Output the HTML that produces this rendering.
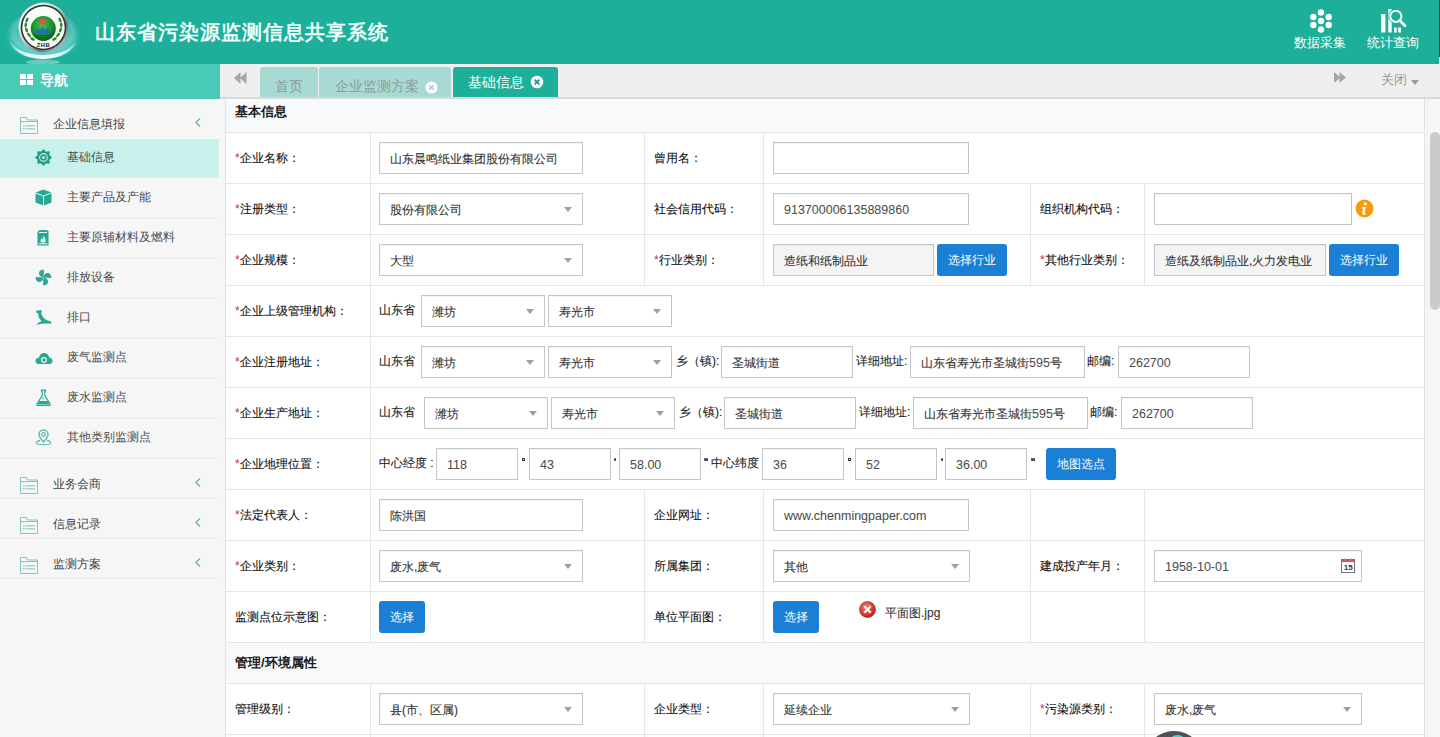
<!DOCTYPE html><html><head><meta charset="utf-8"><style>
html,body{margin:0;padding:0;width:1440px;height:737px;overflow:hidden;background:#f6f6f6;font-family:"Liberation Sans",sans-serif;}
div{position:absolute;box-sizing:content-box;}
.t{white-space:nowrap;}
.req{color:#b8345a;font-size:12px;position:relative;top:0;-webkit-text-stroke:0;}
.in{border:1px solid #c6c6c6;box-shadow:inset 0 1px 1px rgba(0,0,0,.05);}
.l{font-size:12.5px;color:#4d4d4d;-webkit-text-stroke:0.05px #4d4d4d;}
.arr{width:0;height:0;border-left:4.5px solid transparent;border-right:4.5px solid transparent;border-top:5px solid #a0a0a0;}
.btn{background:#1b7fd5;border-radius:3px;color:#fff;font-size:12px;text-align:center;}
.hl{background:#e6e6e6;height:1px;}
.vl{background:#e6e6e6;width:1px;}
</style></head><body>

<div style="left:0px;top:0px;width:1440px;height:64px;background:#1daf99;"></div>
<div style="left:1439px;top:0px;width:1px;height:57px;background:#0e4640;"></div>
<div style="left:1439px;top:57px;width:1px;height:7px;background:#e6f6f3;"></div>
<svg style="position:absolute;left:0;top:0" width="90" height="64" viewBox="0 0 90 64">
<defs>
<linearGradient id="sw" x1="0" y1="0" x2="0" y2="1"><stop offset="0" stop-color="#b8f0ff" stop-opacity="0"/><stop offset="0.6" stop-color="#d8f8ff" stop-opacity="0.8"/><stop offset="1" stop-color="#ffffff" stop-opacity="1"/></linearGradient>
<radialGradient id="gl2" cx="50%" cy="50%" r="50%"><stop offset="0" stop-color="#a8e8f4" stop-opacity="0.7"/><stop offset="1" stop-color="#a8e8f4" stop-opacity="0"/></radialGradient>
<radialGradient id="gl3" cx="50%" cy="45%" r="50%"><stop offset="0.5" stop-color="#c8f4ff" stop-opacity="0"/><stop offset="0.8" stop-color="#c8f4ff" stop-opacity="0.3"/><stop offset="1" stop-color="#c8f4ff" stop-opacity="0"/></radialGradient>
<linearGradient id="rim" x1="0" y1="0" x2="1" y2="1"><stop offset="0" stop-color="#ffffff"/><stop offset="0.45" stop-color="#c8d0d2"/><stop offset="0.7" stop-color="#6f7a7e"/><stop offset="1" stop-color="#e6eeee"/></linearGradient>
<radialGradient id="gb" cx="45%" cy="35%" r="65%"><stop offset="0" stop-color="#4cc04e"/><stop offset="0.7" stop-color="#138a2a"/><stop offset="1" stop-color="#0a5a1a"/></radialGradient>
</defs>
<ellipse cx="43" cy="36" rx="37" ry="25" fill="url(#gl3)"/><ellipse cx="43" cy="42" rx="38" ry="18" fill="url(#gl2)"/>
<path d="M8 38 Q14 58 43 59 Q72 58 78 38 Q70 54 43 55 Q16 54 8 38 Z" fill="url(#sw)"/>
<ellipse cx="43" cy="62" rx="17" ry="2.5" fill="#c0f0f4" opacity="0.45"/>
<circle cx="43.5" cy="27.5" r="25" fill="url(#rim)"/>
<circle cx="43.5" cy="27.5" r="22.8" fill="#2f3436"/>
<circle cx="43.5" cy="27.5" r="21.2" fill="#f6fbf4"/>
<g fill="#2f8a2e">
<ellipse cx="27" cy="20" rx="1.3" ry="2.6" transform="rotate(25 27 20)"/><ellipse cx="25.8" cy="25" rx="1.3" ry="2.6" transform="rotate(5 25.8 25)"/><ellipse cx="26.5" cy="30" rx="1.3" ry="2.6" transform="rotate(-20 26.5 30)"/><ellipse cx="29" cy="35" rx="1.3" ry="2.6" transform="rotate(-40 29 35)"/><ellipse cx="32.5" cy="39" rx="1.3" ry="2.6" transform="rotate(-60 32.5 39)"/>
<ellipse cx="60" cy="20" rx="1.3" ry="2.6" transform="rotate(-25 60 20)"/><ellipse cx="61.2" cy="25" rx="1.3" ry="2.6" transform="rotate(-5 61.2 25)"/><ellipse cx="60.5" cy="30" rx="1.3" ry="2.6" transform="rotate(20 60.5 30)"/><ellipse cx="58" cy="35" rx="1.3" ry="2.6" transform="rotate(40 58 35)"/><ellipse cx="54.5" cy="39" rx="1.3" ry="2.6" transform="rotate(60 54.5 39)"/>
</g>
<circle cx="43.3" cy="28.5" r="12.5" fill="url(#gb)"/>
<circle cx="43" cy="21.5" r="3" fill="#f04a4a"/>
<path d="M35.5 33 L38 28 L40 31 L42.5 26.5 L45 31 L47.5 28 L50.5 33 Z" fill="#2460d8" opacity="0.9"/><path d="M34 35.5 H52.5 M35 37.5 H51.5" stroke="#0b5a1c" stroke-width="0.8"/>
<text x="43.5" y="47" font-size="5.8" font-weight="bold" text-anchor="middle" fill="#1a1a1a" font-family="Liberation Sans" letter-spacing="0.6">ZHB</text>
</svg>
<div class="t" style="left:95px;top:17px;height:30px;line-height:30px;color:#eefffb;font-size:20px;font-weight:bold;letter-spacing:0.97px;">山东省污染源监测信息共享系统</div>
<svg style="position:absolute;left:1305px;top:6px" width="32" height="30" viewBox="0 0 32 30">
<g fill="#fff"><circle cx="16" cy="6.5" r="3.2"/><circle cx="8.3" cy="11" r="3.2"/><circle cx="23.7" cy="11" r="3.2"/><circle cx="16" cy="15" r="3.2"/><circle cx="8.3" cy="19" r="3.2"/><circle cx="23.7" cy="19" r="3.2"/><circle cx="16" cy="23.5" r="3.2"/></g></svg>
<svg style="position:absolute;left:1378px;top:6px" width="32" height="30" viewBox="0 0 32 30">
<g fill="#fff"><rect x="3" y="8" width="4.4" height="18.5"/><rect x="10.3" y="3" width="3.4" height="23.5"/><rect x="16" y="21.5" width="2.7" height="5"/><rect x="20.2" y="21.5" width="2.8" height="5"/></g>
<circle cx="17.8" cy="10.3" r="5.6" stroke="#1daf99" stroke-width="3.6" fill="none"/>
<circle cx="17.8" cy="10.3" r="5.6" stroke="#fff" stroke-width="2" fill="none"/><path d="M21.8 14.5 L27 19.8" stroke="#fff" stroke-width="2.8" stroke-linecap="round"/></svg>
<div class="t" style="left:1294px;top:33px;height:20px;line-height:20px;color:#fff;font-size:13px;">数据采集</div>
<div class="t" style="left:1367px;top:33px;height:20px;line-height:20px;color:#fff;font-size:13px;">统计查询</div>
<div style="left:0px;top:64px;width:220px;height:673px;background:#f6f6f6;"></div>
<div style="left:0px;top:64px;width:220px;height:35px;background:#47cbb6;"></div>
<svg style="position:absolute;left:20px;top:74px" width="13" height="11"><g fill="#fff"><rect x="0" y="0" width="6" height="5"/><rect x="7" y="0" width="6" height="5"/><rect x="0" y="6" width="6" height="5"/><rect x="7" y="6" width="6" height="5"/></g></svg>
<div class="t" style="left:40px;top:70px;height:20px;line-height:20px;color:#fff;font-size:14px;font-weight:bold;">导航</div>
<svg style="position:absolute;left:20px;top:117px" width="18" height="17" viewBox="0 0 18 17"><path d="M0.5 16.5 V0.5 H6 L7.5 3 H17.5 V16.5 Z M0.5 4.5 H17.5" stroke="#7ec9bd" stroke-width="1" fill="none"/><g fill="#9ed6cc"><rect x="3" y="8" width="2" height="1.5"/><rect x="6" y="8" width="9" height="1.5"/><rect x="3" y="11" width="2" height="1.5"/><rect x="6" y="11" width="9" height="1.5"/></g></svg>
<div class="t" style="left:53px;top:114px;height:20px;line-height:20px;color:#444;font-size:12px;">企业信息填报</div>
<svg style="position:absolute;left:194px;top:118px" width="8" height="9"><path d="M6 0.5 L2 4.5 L6 8.5" stroke="#6aaea3" stroke-width="1.3" fill="none"/></svg>
<div style="left:0px;top:139px;width:219px;height:39px;background:#c9f1eb;"></div>
<div style="left:35px;top:149px;width:17px;height:17px"><svg width="17" height="17" viewBox="0 0 17 17"><path d="M8.50 0.30 L10.76 3.05 L14.30 2.70 L13.95 6.24 L16.70 8.50 L13.95 10.76 L14.30 14.30 L10.76 13.95 L8.50 16.70 L6.24 13.95 L2.70 14.30 L3.05 10.76 L0.30 8.50 L3.05 6.24 L2.70 2.70 L6.24 3.05Z" fill="#239c87" stroke="#239c87" stroke-width="0.8" stroke-linejoin="round"/><circle cx="8.5" cy="8.5" r="4.4" fill="#c9f1eb"/><circle cx="8.5" cy="8.5" r="3.3" fill="#239c87"/><circle cx="8.5" cy="8.5" r="1.5" fill="#c9f1eb"/></svg></div>
<div class="t" style="left:67px;top:147px;height:20px;line-height:20px;color:#4a4a4a;font-size:12px;">基础信息</div>
<div style="left:35px;top:189px;width:17px;height:17px"><svg width="17" height="17" viewBox="0 0 17 17"><path d="M8.5 0.5 L16.5 3.5 L8.5 6.5 L0.5 3.5 Z" fill="#26a892"/><path d="M0.5 4.5 L8 7.3 V16.5 L0.5 13.5 Z" fill="#26a892"/><path d="M16.5 4.5 L9 7.3 V16.5 L16.5 13.5 Z" fill="#26a892"/></svg></div>
<div class="t" style="left:67px;top:187px;height:20px;line-height:20px;color:#4a4a4a;font-size:12px;">主要产品及产能</div>
<div style="left:35px;top:229px;width:17px;height:17px"><svg width="17" height="17" viewBox="0 0 17 17"><path d="M4.5 1 H12 L13.5 2.5 V16.5 H2.5 V3 Z" fill="#26a892"/><rect x="4" y="3" width="8" height="1" fill="#f6f6f6"/><path d="M8 6.5 C10.5 9 11 11 10.5 12.5 C10 14 6 14 5.6 12.5 C5.2 11 6.2 9.8 6.8 9 C7 10 7.5 10.5 8 10.2 C8.4 9 8.3 7.5 8 6.5Z" fill="#f6f6f6"/><rect x="3.5" y="14.3" width="9" height="1" fill="#f6f6f6"/></svg></div>
<div class="t" style="left:67px;top:227px;height:20px;line-height:20px;color:#4a4a4a;font-size:12px;">主要原辅材料及燃料</div>
<div style="left:35px;top:269px;width:17px;height:17px"><svg width="17" height="17" viewBox="0 0 17 17"><g fill="#26a892"><path id="bl" d="M8.5 8.5 L9 0.8 C6.5 0.2 3.6 2.2 4 4.8 C4.3 7 6.3 8.3 8.5 8.5Z"/><use href="#bl" transform="rotate(90 8.5 8.5)"/><use href="#bl" transform="rotate(180 8.5 8.5)"/><use href="#bl" transform="rotate(270 8.5 8.5)"/></g></svg></div>
<div class="t" style="left:67px;top:267px;height:20px;line-height:20px;color:#4a4a4a;font-size:12px;">排放设备</div>
<div style="left:35px;top:309px;width:17px;height:17px"><svg width="17" height="17" viewBox="0 0 17 17"><path d="M1.2 1.8 L5.5 1 C6.6 1 7.1 2 6.6 3 L6.2 4.5 C6.8 7.5 9.2 9.8 12 11.2 C13.5 11.9 15 12.3 16.2 12.6 L16.2 14.8 C12.5 14.4 9.5 14.2 7 14.7 C4.8 15.1 3.2 15.8 1.3 15.6 C2.8 13.8 4.8 12.7 6.8 12.2 C4.2 9.8 3 7 3.1 4.2 L1.2 3.8Z" fill="#26a892"/></svg></div>
<div class="t" style="left:67px;top:307px;height:20px;line-height:20px;color:#4a4a4a;font-size:12px;">排口</div>
<div style="left:35px;top:349px;width:17px;height:17px"><svg width="18" height="17" viewBox="0 0 18 17"><path d="M4 15 C1 15 0 12.5 0.8 10.5 C1.5 9 3 8.5 4 8.7 C4.5 5.5 7.5 3.5 10.5 4.3 C13 5 14 7 14 8.5 C16.5 8.5 17.8 10.5 17.5 12.5 C17.2 14 16 15 14.5 15Z" fill="#26a892"/><circle cx="9" cy="11" r="3" fill="#f5f5f5"/><circle cx="9" cy="11" r="1.8" fill="#26a892"/></svg></div>
<div class="t" style="left:67px;top:347px;height:20px;line-height:20px;color:#4a4a4a;font-size:12px;">废气监测点</div>
<div style="left:35px;top:389px;width:17px;height:17px"><svg width="17" height="17" viewBox="0 0 17 17"><path d="M6.5 1 H10.5 V2.2 H9.8 V6.5 L15 15 V16.5 H2 V15 L7.2 6.5 V2.2 H6.5Z" fill="none" stroke="#26a892" stroke-width="1.2"/><path d="M4.5 12 H12.5 L14.5 15.5 H2.5Z" fill="#26a892"/><circle cx="8" cy="9.5" r="0.8" fill="#26a892"/></svg></div>
<div class="t" style="left:67px;top:387px;height:20px;line-height:20px;color:#4a4a4a;font-size:12px;">废水监测点</div>
<div style="left:35px;top:429px;width:17px;height:17px"><svg width="17" height="17" viewBox="0 0 17 17"><path d="M8.5 13 C5.5 9.5 4 7.5 4 5.5 C4 3 6 1 8.5 1 C11 1 13 3 13 5.5 C13 7.5 11.5 9.5 8.5 13Z" fill="none" stroke="#5bbfae" stroke-width="1.5"/><circle cx="8.5" cy="5.5" r="1.8" fill="none" stroke="#5bbfae" stroke-width="1.3"/><path d="M5 11.5 C2 12 1 13 1.5 14.5 C2.5 16 14.5 16 15.5 14.5 C16 13 15 12 12 11.5" fill="none" stroke="#5bbfae" stroke-width="1.3"/></svg></div>
<div class="t" style="left:67px;top:427px;height:20px;line-height:20px;color:#4a4a4a;font-size:12px;">其他类别监测点</div>
<div style="left:0px;top:218px;width:219px;height:1px;background:#e9e9e9;"></div>
<div style="left:0px;top:258px;width:219px;height:1px;background:#e9e9e9;"></div>
<div style="left:0px;top:298px;width:219px;height:1px;background:#e9e9e9;"></div>
<div style="left:0px;top:338px;width:219px;height:1px;background:#e9e9e9;"></div>
<div style="left:0px;top:378px;width:219px;height:1px;background:#e9e9e9;"></div>
<div style="left:0px;top:418px;width:219px;height:1px;background:#e9e9e9;"></div>
<div style="left:0px;top:458px;width:219px;height:1px;background:#e9e9e9;"></div>
<div style="left:0px;top:498px;width:219px;height:1px;background:#e9e9e9;"></div>
<div style="left:0px;top:538px;width:219px;height:1px;background:#e9e9e9;"></div>
<div style="left:0px;top:578px;width:219px;height:1px;background:#e9e9e9;"></div>
<svg style="position:absolute;left:20px;top:477px" width="18" height="17" viewBox="0 0 18 17"><path d="M0.5 16.5 V0.5 H6 L7.5 3 H17.5 V16.5 Z M0.5 4.5 H17.5" stroke="#7ec9bd" stroke-width="1" fill="none"/><g fill="#9ed6cc"><rect x="3" y="8" width="2" height="1.5"/><rect x="6" y="8" width="9" height="1.5"/><rect x="3" y="11" width="2" height="1.5"/><rect x="6" y="11" width="9" height="1.5"/></g></svg>
<div class="t" style="left:53px;top:474px;height:20px;line-height:20px;color:#444;font-size:12px;">业务会商</div>
<svg style="position:absolute;left:194px;top:478px" width="8" height="9"><path d="M6 0.5 L2 4.5 L6 8.5" stroke="#6aaea3" stroke-width="1.3" fill="none"/></svg>
<svg style="position:absolute;left:20px;top:517px" width="18" height="17" viewBox="0 0 18 17"><path d="M0.5 16.5 V0.5 H6 L7.5 3 H17.5 V16.5 Z M0.5 4.5 H17.5" stroke="#7ec9bd" stroke-width="1" fill="none"/><g fill="#9ed6cc"><rect x="3" y="8" width="2" height="1.5"/><rect x="6" y="8" width="9" height="1.5"/><rect x="3" y="11" width="2" height="1.5"/><rect x="6" y="11" width="9" height="1.5"/></g></svg>
<div class="t" style="left:53px;top:514px;height:20px;line-height:20px;color:#444;font-size:12px;">信息记录</div>
<svg style="position:absolute;left:194px;top:518px" width="8" height="9"><path d="M6 0.5 L2 4.5 L6 8.5" stroke="#6aaea3" stroke-width="1.3" fill="none"/></svg>
<svg style="position:absolute;left:20px;top:557px" width="18" height="17" viewBox="0 0 18 17"><path d="M0.5 16.5 V0.5 H6 L7.5 3 H17.5 V16.5 Z M0.5 4.5 H17.5" stroke="#7ec9bd" stroke-width="1" fill="none"/><g fill="#9ed6cc"><rect x="3" y="8" width="2" height="1.5"/><rect x="6" y="8" width="9" height="1.5"/><rect x="3" y="11" width="2" height="1.5"/><rect x="6" y="11" width="9" height="1.5"/></g></svg>
<div class="t" style="left:53px;top:554px;height:20px;line-height:20px;color:#444;font-size:12px;">监测方案</div>
<svg style="position:absolute;left:194px;top:558px" width="8" height="9"><path d="M6 0.5 L2 4.5 L6 8.5" stroke="#6aaea3" stroke-width="1.3" fill="none"/></svg>
<div style="left:220px;top:64px;width:1220px;height:33px;background:#efefef;"></div>
<div style="left:220px;top:97px;width:1220px;height:2px;background:#d9d9d9;"></div>
<svg style="position:absolute;left:233.5px;top:72px" width="13" height="12"><path d="M0 6 L6.5 0 V12Z M6 6 L12.5 0 V12Z" fill="#a6a6a6"/></svg>
<svg style="position:absolute;left:1333.5px;top:71.5px" width="13" height="12"><path d="M0 0 L6.5 5.5 L0 11Z M5.5 0 L12 5.5 L5.5 11Z" fill="#a6a6a6"/></svg>
<div style="left:260px;top:67px;width:58px;height:30px;background:#a8d9d3;border-radius:3px 3px 0 0;"></div>
<div class="t" style="left:275px;top:76px;height:20px;line-height:20px;color:#8c9c9a;font-size:14px;">首页</div>
<div style="left:319px;top:67px;width:132px;height:30px;background:#a8d9d3;border-radius:3px 3px 0 0;"></div>
<div class="t" style="left:335px;top:76px;height:20px;line-height:20px;color:#8c9c9a;font-size:14px;">企业监测方案</div>
<svg style="position:absolute;left:425px;top:81px" width="13" height="13"><circle cx="6.5" cy="6.5" r="6" fill="#fff"/><path d="M4.2 4.2 L8.8 8.8 M8.8 4.2 L4.2 8.8" stroke="#b5c9c6" stroke-width="1.6"/></svg>
<div style="left:453px;top:67px;width:105px;height:30px;background:#1daf99;border-radius:3px 3px 0 0;"></div>
<div class="t" style="left:468px;top:72px;height:20px;line-height:20px;color:#fff;font-size:14px;">基础信息</div>
<svg style="position:absolute;left:530px;top:75px" width="14" height="14"><circle cx="7" cy="7" r="6.3" fill="#fff"/><path d="M4.6 4.6 L9.4 9.4 M9.4 4.6 L4.6 9.4" stroke="#1e9c88" stroke-width="1.8"/></svg>
<div class="t" style="left:1381px;top:70px;height:20px;line-height:20px;color:#999;font-size:13px;">关闭</div>
<div class="arr" style="left:1411px;top:80px;border-top-color:#999;"></div>
<div style="left:225px;top:99px;width:1px;height:638px;background:#e2e2e2;"></div>
<div style="left:226px;top:99px;width:1198px;height:33px;background:#f8f9fb;"></div>
<div style="left:1424px;top:99px;width:1px;height:638px;background:#e2e2e2;"></div>
<div style="left:226px;top:132px;width:1198px;height:605px;background:#fff;"></div>
<div style="left:226px;top:642px;width:1198px;height:41px;background:#f8f9fb;"></div>
<div class="t" style="left:235px;top:102px;height:20px;line-height:20px;color:#1a1a1a;font-size:13px;font-weight:bold;">基本信息</div>
<div class="t" style="left:235px;top:653px;height:20px;line-height:20px;color:#1a1a1a;font-size:13px;font-weight:bold;">管理/环境属性</div>
<div style="left:226px;top:132px;width:1198px;height:1px;background:#e6e6e6;"></div>
<div style="left:226px;top:183px;width:1198px;height:1px;background:#e6e6e6;"></div>
<div style="left:226px;top:234px;width:1198px;height:1px;background:#e6e6e6;"></div>
<div style="left:226px;top:285px;width:1198px;height:1px;background:#e6e6e6;"></div>
<div style="left:226px;top:336px;width:1198px;height:1px;background:#e6e6e6;"></div>
<div style="left:226px;top:387px;width:1198px;height:1px;background:#e6e6e6;"></div>
<div style="left:226px;top:438px;width:1198px;height:1px;background:#e6e6e6;"></div>
<div style="left:226px;top:489px;width:1198px;height:1px;background:#e6e6e6;"></div>
<div style="left:226px;top:540px;width:1198px;height:1px;background:#e6e6e6;"></div>
<div style="left:226px;top:591px;width:1198px;height:1px;background:#e6e6e6;"></div>
<div style="left:226px;top:642px;width:1198px;height:1px;background:#e6e6e6;"></div>
<div style="left:226px;top:683px;width:1198px;height:1px;background:#e6e6e6;"></div>
<div style="left:226px;top:734px;width:1198px;height:1px;background:#e6e6e6;"></div>
<div style="left:370px;top:132px;width:1px;height:510px;background:#e6e6e6;"></div>
<div style="left:370px;top:683px;width:1px;height:54px;background:#e6e6e6;"></div>
<div style="left:644px;top:132px;width:1px;height:153px;background:#e6e6e6;"></div>
<div style="left:644px;top:489px;width:1px;height:153px;background:#e6e6e6;"></div>
<div style="left:644px;top:683px;width:1px;height:54px;background:#e6e6e6;"></div>
<div style="left:763px;top:132px;width:1px;height:153px;background:#e6e6e6;"></div>
<div style="left:763px;top:489px;width:1px;height:153px;background:#e6e6e6;"></div>
<div style="left:763px;top:683px;width:1px;height:54px;background:#e6e6e6;"></div>
<div style="left:1030px;top:183px;width:1px;height:102px;background:#e6e6e6;"></div>
<div style="left:1030px;top:489px;width:1px;height:153px;background:#e6e6e6;"></div>
<div style="left:1030px;top:683px;width:1px;height:54px;background:#e6e6e6;"></div>
<div style="left:1144px;top:183px;width:1px;height:102px;background:#e6e6e6;"></div>
<div style="left:1144px;top:489px;width:1px;height:153px;background:#e6e6e6;"></div>
<div style="left:1144px;top:683px;width:1px;height:54px;background:#e6e6e6;"></div>
<div class="t" style="left:235px;top:148px;height:20px;line-height:20px;color:#111;font-size:12px;-webkit-text-stroke:0.1px #111;"><span class="req">*</span>企业名称：</div>
<div class="in" style="left:379px;top:142px;width:202px;height:30px;background:#fff"></div>
<div class="t" style="left:390px;top:149px;height:20px;line-height:20px;color:#333;font-size:12px;-webkit-text-stroke:0.1px #333;">山东晨鸣纸业集团股份有限公司</div>
<div class="t" style="left:654px;top:148px;height:20px;line-height:20px;color:#111;font-size:12px;-webkit-text-stroke:0.1px #111;">曾用名：</div>
<div class="in" style="left:773px;top:142px;width:194px;height:30px;background:#fff"></div>
<div class="t" style="left:235px;top:199px;height:20px;line-height:20px;color:#111;font-size:12px;-webkit-text-stroke:0.1px #111;"><span class="req">*</span>注册类型：</div>
<div class="in" style="left:379px;top:193px;width:202px;height:30px;background:#fff"></div>
<div class="t" style="left:390px;top:200px;height:20px;line-height:20px;color:#333;font-size:12px;-webkit-text-stroke:0.1px #333;">股份有限公司</div>
<div class="arr" style="left:564px;top:207px"></div>
<div class="t" style="left:654px;top:199px;height:20px;line-height:20px;color:#111;font-size:12px;-webkit-text-stroke:0.1px #111;">社会信用代码：</div>
<div class="in" style="left:773px;top:193px;width:194px;height:30px;background:#fff"></div>
<div class="t" style="left:784px;top:200px;height:20px;line-height:20px;color:#333;font-size:12px;-webkit-text-stroke:0.1px #333;"><span class="l">913700006135889860</span></div>
<div class="t" style="left:1040px;top:199px;height:20px;line-height:20px;color:#111;font-size:12px;-webkit-text-stroke:0.1px #111;">组织机构代码：</div>
<div class="in" style="left:1154px;top:193px;width:196px;height:30px;background:#fff"></div>
<svg style="position:absolute;left:1355px;top:199px" width="19" height="19"><circle cx="9.5" cy="9.5" r="9" fill="#f39c12"/><circle cx="10.3" cy="4.8" r="1.6" fill="#fff"/><path d="M7.2 8 H11 L9.5 13.5 C9.3 14.3 10 14.5 11 14 L10.5 15.5 C8.5 16.2 6.8 15.6 7.3 13.8 L8.4 9.5 H7 Z" fill="#fff"/></svg>
<div class="t" style="left:235px;top:250px;height:20px;line-height:20px;color:#111;font-size:12px;-webkit-text-stroke:0.1px #111;"><span class="req">*</span>企业规模：</div>
<div class="in" style="left:379px;top:244px;width:202px;height:30px;background:#fff"></div>
<div class="t" style="left:390px;top:251px;height:20px;line-height:20px;color:#333;font-size:12px;-webkit-text-stroke:0.1px #333;">大型</div>
<div class="arr" style="left:564px;top:258px"></div>
<div class="t" style="left:654px;top:250px;height:20px;line-height:20px;color:#111;font-size:12px;-webkit-text-stroke:0.1px #111;"><span class="req">*</span>行业类别：</div>
<div class="in" style="left:773px;top:244px;width:159px;height:30px;background:#f4f4f4"></div>
<div class="t" style="left:784px;top:251px;height:20px;line-height:20px;color:#333;font-size:12px;-webkit-text-stroke:0.1px #333;">造纸和纸制品业</div>
<div class="btn" style="left:937px;top:244px;width:70px;height:32px;line-height:32px">选择行业</div>
<div class="t" style="left:1040px;top:250px;height:20px;line-height:20px;color:#111;font-size:12px;-webkit-text-stroke:0.1px #111;"><span class="req">*</span>其他行业类别：</div>
<div class="in" style="left:1154px;top:244px;width:170px;height:30px;background:#f4f4f4"></div>
<div class="t" style="left:1165px;top:251px;height:20px;line-height:20px;color:#333;font-size:12px;-webkit-text-stroke:0.1px #333;">造纸及纸制品业,火力发电业</div>
<div class="btn" style="left:1329px;top:244px;width:70px;height:32px;line-height:32px">选择行业</div>
<div class="t" style="left:235px;top:301px;height:20px;line-height:20px;color:#111;font-size:12px;-webkit-text-stroke:0.1px #111;"><span class="req">*</span>企业上级管理机构：</div>
<div class="t" style="left:379px;top:300px;height:20px;line-height:20px;color:#222;font-size:12px;-webkit-text-stroke:0.1px #222;">山东省</div>
<div class="in" style="left:421px;top:295px;width:122px;height:30px;background:#fff"></div>
<div class="t" style="left:432px;top:302px;height:20px;line-height:20px;color:#333;font-size:12px;-webkit-text-stroke:0.1px #333;">潍坊</div>
<div class="arr" style="left:526px;top:309px"></div>
<div class="in" style="left:548px;top:295px;width:122px;height:30px;background:#fff"></div>
<div class="t" style="left:559px;top:302px;height:20px;line-height:20px;color:#333;font-size:12px;-webkit-text-stroke:0.1px #333;">寿光市</div>
<div class="arr" style="left:653px;top:309px"></div>
<div class="t" style="left:235px;top:352px;height:20px;line-height:20px;color:#111;font-size:12px;-webkit-text-stroke:0.1px #111;"><span class="req">*</span>企业注册地址：</div>
<div class="t" style="left:379px;top:351px;height:20px;line-height:20px;color:#222;font-size:12px;-webkit-text-stroke:0.1px #222;">山东省</div>
<div class="in" style="left:421px;top:346px;width:122px;height:30px;background:#fff"></div>
<div class="t" style="left:432px;top:353px;height:20px;line-height:20px;color:#333;font-size:12px;-webkit-text-stroke:0.1px #333;">潍坊</div>
<div class="arr" style="left:526px;top:360px"></div>
<div class="in" style="left:548px;top:346px;width:122px;height:30px;background:#fff"></div>
<div class="t" style="left:559px;top:353px;height:20px;line-height:20px;color:#333;font-size:12px;-webkit-text-stroke:0.1px #333;">寿光市</div>
<div class="arr" style="left:653px;top:360px"></div>
<div class="t" style="left:676px;top:351px;height:20px;line-height:20px;color:#222;font-size:12px;-webkit-text-stroke:0.1px #222;">乡（镇):</div>
<div class="in" style="left:721px;top:346px;width:130px;height:30px;background:#fff"></div>
<div class="t" style="left:732px;top:353px;height:20px;line-height:20px;color:#333;font-size:12px;-webkit-text-stroke:0.1px #333;">圣城街道</div>
<div class="t" style="left:856px;top:351px;height:20px;line-height:20px;color:#222;font-size:12px;-webkit-text-stroke:0.1px #222;">详细地址:</div>
<div class="in" style="left:910px;top:346px;width:173px;height:30px;background:#fff"></div>
<div class="t" style="left:921px;top:353px;height:20px;line-height:20px;color:#333;font-size:12px;-webkit-text-stroke:0.1px #333;">山东省寿光市圣城街<span class="l">595</span>号</div>
<div class="t" style="left:1087px;top:351px;height:20px;line-height:20px;color:#222;font-size:12px;-webkit-text-stroke:0.1px #222;">邮编:</div>
<div class="in" style="left:1118px;top:346px;width:130px;height:30px;background:#fff"></div>
<div class="t" style="left:1129px;top:353px;height:20px;line-height:20px;color:#333;font-size:12px;-webkit-text-stroke:0.1px #333;"><span class="l">262700</span></div>
<div class="t" style="left:235px;top:403px;height:20px;line-height:20px;color:#111;font-size:12px;-webkit-text-stroke:0.1px #111;"><span class="req">*</span>企业生产地址：</div>
<div class="t" style="left:379px;top:402px;height:20px;line-height:20px;color:#222;font-size:12px;-webkit-text-stroke:0.1px #222;">山东省</div>
<div class="in" style="left:424px;top:397px;width:122px;height:30px;background:#fff"></div>
<div class="t" style="left:435px;top:404px;height:20px;line-height:20px;color:#333;font-size:12px;-webkit-text-stroke:0.1px #333;">潍坊</div>
<div class="arr" style="left:529px;top:411px"></div>
<div class="in" style="left:551px;top:397px;width:122px;height:30px;background:#fff"></div>
<div class="t" style="left:562px;top:404px;height:20px;line-height:20px;color:#333;font-size:12px;-webkit-text-stroke:0.1px #333;">寿光市</div>
<div class="arr" style="left:656px;top:411px"></div>
<div class="t" style="left:679px;top:402px;height:20px;line-height:20px;color:#222;font-size:12px;-webkit-text-stroke:0.1px #222;">乡（镇):</div>
<div class="in" style="left:724px;top:397px;width:130px;height:30px;background:#fff"></div>
<div class="t" style="left:735px;top:404px;height:20px;line-height:20px;color:#333;font-size:12px;-webkit-text-stroke:0.1px #333;">圣城街道</div>
<div class="t" style="left:859px;top:402px;height:20px;line-height:20px;color:#222;font-size:12px;-webkit-text-stroke:0.1px #222;">详细地址:</div>
<div class="in" style="left:913px;top:397px;width:173px;height:30px;background:#fff"></div>
<div class="t" style="left:924px;top:404px;height:20px;line-height:20px;color:#333;font-size:12px;-webkit-text-stroke:0.1px #333;">山东省寿光市圣城街<span class="l">595</span>号</div>
<div class="t" style="left:1090px;top:402px;height:20px;line-height:20px;color:#222;font-size:12px;-webkit-text-stroke:0.1px #222;">邮编:</div>
<div class="in" style="left:1121px;top:397px;width:130px;height:30px;background:#fff"></div>
<div class="t" style="left:1132px;top:404px;height:20px;line-height:20px;color:#333;font-size:12px;-webkit-text-stroke:0.1px #333;"><span class="l">262700</span></div>
<div class="t" style="left:235px;top:454px;height:20px;line-height:20px;color:#111;font-size:12px;-webkit-text-stroke:0.1px #111;"><span class="req">*</span>企业地理位置：</div>
<div class="t" style="left:379px;top:453px;height:20px;line-height:20px;color:#222;font-size:12px;-webkit-text-stroke:0.1px #222;">中心经度 :</div>
<div class="in" style="left:436px;top:448px;width:80px;height:30px;background:#fff"></div>
<div class="t" style="left:447px;top:455px;height:20px;line-height:20px;color:#333;font-size:12px;-webkit-text-stroke:0.1px #333;"><span class="l">118</span></div>
<div style="left:522px;top:458px;width:1px;height:1px;border:1px solid #333;"></div>
<div class="in" style="left:529px;top:448px;width:80px;height:30px;background:#fff"></div>
<div class="t" style="left:540px;top:455px;height:20px;line-height:20px;color:#333;font-size:12px;-webkit-text-stroke:0.1px #333;"><span class="l">43</span></div>
<div style="left:614px;top:458px;width:2px;height:3px;background:#444;border-radius:1px 1px 0 1px;"></div>
<div class="in" style="left:619px;top:448px;width:80px;height:30px;background:#fff"></div>
<div class="t" style="left:630px;top:455px;height:20px;line-height:20px;color:#333;font-size:12px;-webkit-text-stroke:0.1px #333;"><span class="l">58.00</span></div>
<div style="left:704px;top:458px;width:2px;height:3px;background:#444;border-radius:1px 1px 0 1px;"></div>
<div style="left:706px;top:458px;width:2px;height:3px;background:#444;border-radius:1px 1px 0 1px;"></div>
<div class="t" style="left:711px;top:453px;height:20px;line-height:20px;color:#222;font-size:12px;-webkit-text-stroke:0.1px #222;">中心纬度</div>
<div class="in" style="left:762px;top:448px;width:80px;height:30px;background:#fff"></div>
<div class="t" style="left:773px;top:455px;height:20px;line-height:20px;color:#333;font-size:12px;-webkit-text-stroke:0.1px #333;"><span class="l">36</span></div>
<div style="left:848px;top:458px;width:1px;height:1px;border:1px solid #333;"></div>
<div class="in" style="left:855px;top:448px;width:80px;height:30px;background:#fff"></div>
<div class="t" style="left:866px;top:455px;height:20px;line-height:20px;color:#333;font-size:12px;-webkit-text-stroke:0.1px #333;"><span class="l">52</span></div>
<div style="left:941px;top:458px;width:2px;height:3px;background:#444;border-radius:1px 1px 0 1px;"></div>
<div class="in" style="left:945px;top:448px;width:80px;height:30px;background:#fff"></div>
<div class="t" style="left:956px;top:455px;height:20px;line-height:20px;color:#333;font-size:12px;-webkit-text-stroke:0.1px #333;"><span class="l">36.00</span></div>
<div style="left:1031px;top:458px;width:2px;height:3px;background:#444;border-radius:1px 1px 0 1px;"></div>
<div style="left:1033px;top:458px;width:2px;height:3px;background:#444;border-radius:1px 1px 0 1px;"></div>
<div class="btn" style="left:1046px;top:448px;width:70px;height:32px;line-height:32px">地图选点</div>
<div class="t" style="left:235px;top:505px;height:20px;line-height:20px;color:#111;font-size:12px;-webkit-text-stroke:0.1px #111;"><span class="req">*</span>法定代表人：</div>
<div class="in" style="left:379px;top:499px;width:202px;height:30px;background:#fff"></div>
<div class="t" style="left:390px;top:506px;height:20px;line-height:20px;color:#333;font-size:12px;-webkit-text-stroke:0.1px #333;">陈洪国</div>
<div class="t" style="left:654px;top:505px;height:20px;line-height:20px;color:#111;font-size:12px;-webkit-text-stroke:0.1px #111;">企业网址：</div>
<div class="in" style="left:773px;top:499px;width:194px;height:30px;background:#fff"></div>
<div class="t" style="left:784px;top:506px;height:20px;line-height:20px;color:#333;font-size:12px;-webkit-text-stroke:0.1px #333;"><span class="l">www.chenmingpaper.com</span></div>
<div class="t" style="left:235px;top:556px;height:20px;line-height:20px;color:#111;font-size:12px;-webkit-text-stroke:0.1px #111;"><span class="req">*</span>企业类别：</div>
<div class="in" style="left:379px;top:550px;width:202px;height:30px;background:#fff"></div>
<div class="t" style="left:390px;top:557px;height:20px;line-height:20px;color:#333;font-size:12px;-webkit-text-stroke:0.1px #333;">废水,废气</div>
<div class="arr" style="left:564px;top:564px"></div>
<div class="t" style="left:654px;top:556px;height:20px;line-height:20px;color:#111;font-size:12px;-webkit-text-stroke:0.1px #111;">所属集团：</div>
<div class="in" style="left:773px;top:550px;width:195px;height:30px;background:#fff"></div>
<div class="t" style="left:784px;top:557px;height:20px;line-height:20px;color:#333;font-size:12px;-webkit-text-stroke:0.1px #333;">其他</div>
<div class="arr" style="left:951px;top:564px"></div>
<div class="t" style="left:1040px;top:556px;height:20px;line-height:20px;color:#111;font-size:12px;-webkit-text-stroke:0.1px #111;">建成投产年月：</div>
<div class="in" style="left:1154px;top:550px;width:206px;height:30px;background:#fff"></div>
<div class="t" style="left:1165px;top:557px;height:20px;line-height:20px;color:#333;font-size:12px;-webkit-text-stroke:0.1px #333;"><span class="l">1958-10-01</span></div>
<svg style="position:absolute;left:1341px;top:558px" width="15" height="15"><rect x="0.5" y="1.5" width="13" height="13" fill="#fff" stroke="#6f6f6f"/><rect x="0.5" y="1.5" width="13" height="2.5" fill="#c85a58"/><rect x="3" y="0.5" width="1.2" height="2" fill="#b88"/><rect x="9.8" y="0.5" width="1.2" height="2" fill="#b88"/><text x="7.3" y="12" font-size="8" font-weight="bold" text-anchor="middle" fill="#333" font-family="Liberation Sans">15</text></svg>
<div class="t" style="left:235px;top:607px;height:20px;line-height:20px;color:#111;font-size:12px;-webkit-text-stroke:0.1px #111;">监测点位示意图：</div>
<div class="btn" style="left:379px;top:601px;width:46px;height:32px;line-height:32px">选择</div>
<div class="t" style="left:654px;top:607px;height:20px;line-height:20px;color:#111;font-size:12px;-webkit-text-stroke:0.1px #111;">单位平面图：</div>
<div class="btn" style="left:773px;top:601px;width:46px;height:32px;line-height:32px">选择</div>
<svg style="position:absolute;left:859px;top:601px" width="17" height="17"><defs><radialGradient id="rx" cx="40%" cy="35%" r="65%"><stop offset="0" stop-color="#ff7b6b"/><stop offset="1" stop-color="#c0201a"/></radialGradient></defs><circle cx="8.5" cy="8.5" r="8" fill="url(#rx)" stroke="#9a1a14" stroke-width="0.6"/><path d="M5.3 5.3 L11.7 11.7 M11.7 5.3 L5.3 11.7" stroke="#fff" stroke-width="2.2"/></svg>
<div class="t" style="left:885px;top:603px;height:20px;line-height:20px;color:#333;font-size:12px;-webkit-text-stroke:0.1px #333;">平面图.jpg</div>
<div class="t" style="left:235px;top:699px;height:20px;line-height:20px;color:#111;font-size:12px;-webkit-text-stroke:0.1px #111;">管理级别：</div>
<div class="in" style="left:379px;top:693px;width:202px;height:30px;background:#fff"></div>
<div class="t" style="left:390px;top:700px;height:20px;line-height:20px;color:#333;font-size:12px;-webkit-text-stroke:0.1px #333;">县(市、区属)</div>
<div class="arr" style="left:564px;top:707px"></div>
<div class="t" style="left:654px;top:699px;height:20px;line-height:20px;color:#111;font-size:12px;-webkit-text-stroke:0.1px #111;">企业类型：</div>
<div class="in" style="left:773px;top:693px;width:195px;height:30px;background:#fff"></div>
<div class="t" style="left:784px;top:700px;height:20px;line-height:20px;color:#333;font-size:12px;-webkit-text-stroke:0.1px #333;">延续企业</div>
<div class="arr" style="left:951px;top:707px"></div>
<div class="t" style="left:1040px;top:699px;height:20px;line-height:20px;color:#111;font-size:12px;-webkit-text-stroke:0.1px #111;"><span class="req">*</span>污染源类别：</div>
<div class="in" style="left:1154px;top:693px;width:206px;height:30px;background:#fff"></div>
<div class="t" style="left:1165px;top:700px;height:20px;line-height:20px;color:#333;font-size:12px;-webkit-text-stroke:0.1px #333;">废水,废气</div>
<div class="arr" style="left:1343px;top:707px"></div>
<div style="left:1144px;top:731px;width:60px;height:60px;border-radius:50%;background:#4b5157;box-shadow:0 0 3px 1px rgba(255,255,255,0.9);"></div>
<div style="left:1172px;top:735px;width:11px;height:5px;border-radius:50%;background:#3fd6cf;"></div>
<div style="left:1425px;top:99px;width:15px;height:638px;background:#f6f7f9;"></div>
<div style="left:1427px;top:99px;width:1px;height:638px;background:#eeeff1;"></div>
<div style="left:1430px;top:132px;width:10px;height:178px;background:#cbcbce;border-radius:5px;"></div>
</body></html>
